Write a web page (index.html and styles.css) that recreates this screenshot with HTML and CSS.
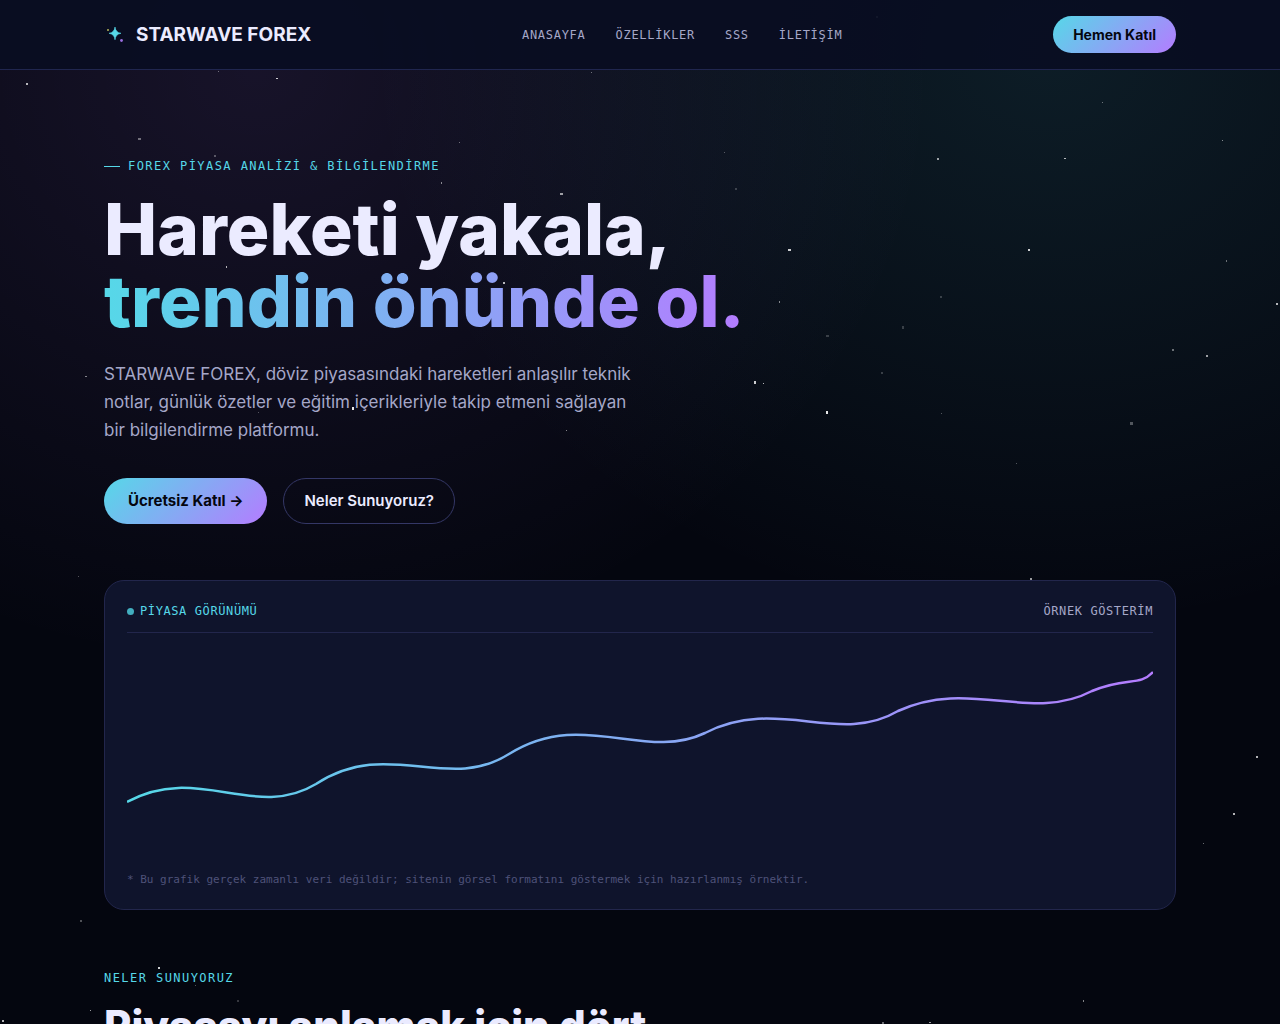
FILE: index.html
```html
<!DOCTYPE html>
<html lang="tr">

<head>
    <meta charset="UTF-8">
    <meta name="viewport" content="width=device-width, initial-scale=1.0">
    <title>STARWAVE FOREX</title>
    <link rel="stylesheet" href="styles.css">
</head>

<body>
    <svg class="stars" id="stars" aria-hidden="true"></svg>

    <header class="site-header">
        <div class="container header-inner">
            <a class="logo" href="#">
                <svg width="22" height="22" viewBox="0 0 22 22" aria-hidden="true">
                    <path d="M11 3 Q11.6 8.6 17 9.3 Q11.6 10 11 15.8 Q10.4 10 5 9.3 Q10.4 8.6 11 3Z" fill="#56d8e8" stroke="#56d8e8" stroke-width="0.6" />
                    <circle cx="4" cy="6" r="1" fill="#b5b65a" />
                    <circle cx="17.5" cy="16.5" r="1.4" fill="#9a6ee0" />
                </svg>
                <span>STARWAVE FOREX</span>
            </a>
            <nav class="nav">
                <a href="#">ANASAYFA</a>
                <a href="#ozellikler">ÖZELLİKLER</a>
                <a href="#sss">SSS</a>
                <a href="#iletisim">İLETİŞİM</a>
            </nav>
            <a class="btn btn-small btn-primary" href="#katil">Hemen Katıl</a>
        </div>
    </header>

    <main class="container">
        <section class="hero">
            <p class="eyebrow eyebrow-line">FOREX PİYASA ANALİZİ &amp; BİLGİLENDİRME</p>
            <h1>Hareketi yakala,<br><span class="gradient-text">trendin önünde ol.</span></h1>
            <p class="lead">STARWAVE FOREX, döviz piyasasındaki hareketleri anlaşılır teknik notlar, günlük özetler ve eğitim içerikleriyle takip etmeni sağlayan bir bilgilendirme platformu.</p>
            <div class="actions">
                <a class="btn btn-primary" href="#katil">Ücretsiz Katıl →</a>
                <a class="btn btn-ghost" href="#ozellikler">Neler Sunuyoruz?</a>
            </div>
        </section>

        <section class="chart-card">
            <div class="chart-head">
                <span class="live">PİYASA GÖRÜNÜMÜ</span>
                <span>ÖRNEK GÖSTERİM</span>
            </div>
            <svg class="chart" viewBox="0 0 1026 220" preserveAspectRatio="none" aria-hidden="true">
                <defs>
                    <linearGradient id="line" x1="0" y1="0" x2="1" y2="0">
                        <stop offset="0" stop-color="#56d8e8" />
                        <stop offset="1" stop-color="#b47cff" />
                    </linearGradient>
                </defs>
                <path d="M0 160 C70 121 128 179 189 142 C260 95 321 151 382 112 C455 66 517 120 578 91 C650 54 712 104 771 69 C842 36 904 81 965 49 C1000 34 1012 45 1026 30" fill="none" stroke="url(#line)" stroke-width="2.5" />
            </svg>
            <p class="chart-note">* Bu grafik gerçek zamanlı veri değildir; sitenin görsel formatını göstermek için hazırlanmış örnektir.</p>
        </section>

        <section class="features" id="ozellikler">
            <p class="eyebrow">NELER SUNUYORUZ</p>
            <h2>Piyasayı anlamak için dört</h2>
        </section>
    </main>

    <script src="stars.js"></script>
</body>

</html>
```

FILE: styles.css
```css
* {
    box-sizing: border-box;
}

body {
    margin: 0;
    font-family: Inter, sans-serif;
    color: #ebebff;
    background-color: #04060f;
    background-image:
        radial-gradient(ellipse 680px 600px at 20% 70px, rgba(180, 124, 255, 0.11), transparent),
        radial-gradient(ellipse 680px 580px at 82% 50px, rgba(86, 216, 232, 0.11), transparent);
    background-repeat: no-repeat;
    overflow-x: hidden;
}

a {
    color: inherit;
    text-decoration: none;
}

h1,
h2,
p {
    margin: 0;
}

.container {
    max-width: 1120px;
    margin: 0 auto;
    padding: 0 24px;
}

/* star field lies over the text but under the card and header */
.stars {
    position: absolute;
    top: 0;
    left: 0;
    width: 100%;
    height: 1024px;
    z-index: 1;
    pointer-events: none;
}

.site-header {
    position: relative;
    z-index: 2;
    background-color: rgba(9, 13, 34, 0.92);
    border-bottom: 1px solid #20264f;
}

.header-inner {
    display: flex;
    align-items: center;
    justify-content: space-between;
    padding-top: 16px;
    padding-bottom: 16px;
}

.logo {
    display: flex;
    align-items: center;
    gap: 10px;
    font-size: 19px;
    line-height: 24px;
    font-weight: 700;
}

.nav {
    display: flex;
    gap: 30px;
    font-family: "DejaVu Sans Mono", monospace;
    font-size: 12px;
    letter-spacing: 0.06em;
    color: #a5a7c8;
}

.btn {
    display: inline-block;
    border-radius: 24px;
    padding: 13px 24px;
    font-size: 15px;
    line-height: 20px;
    font-weight: 700;
}

.btn-small {
    padding: 9px 20px;
    font-size: 14px;
    line-height: 19px;
}

.btn-primary {
    background-image: linear-gradient(135deg, #56d8e8, #b47cff);
    color: #04060f;
}

.btn-ghost {
    border: 1px solid #343766;
    padding: 12px 20px;
    font-weight: 600;
}

.hero {
    padding: 86px 0 56px;
}

.eyebrow {
    font-family: "DejaVu Sans Mono", monospace;
    font-size: 12px;
    line-height: 20px;
    letter-spacing: 0.12em;
    color: #56d8e8;
}

.eyebrow-line {
    display: flex;
    align-items: center;
    gap: 8px;
}

.eyebrow-line::before {
    content: "";
    width: 16px;
    height: 1px;
    background-color: #56d8e8;
}

h1 {
    margin-top: 17px;
    font-size: 71px;
    line-height: 72px;
    font-weight: 800;
}

.gradient-text {
    background-image: linear-gradient(90deg, #56d8e8, #b47cff);
    -webkit-background-clip: text;
    background-clip: text;
    color: transparent;
}

.lead {
    max-width: 540px;
    margin-top: 23px;
    font-size: 17px;
    line-height: 28px;
    color: #a5a7c8;
}

.actions {
    display: flex;
    gap: 16px;
    margin-top: 34px;
}

.chart-card {
    position: relative;
    z-index: 2;
    padding: 20px 22px;
    border: 1px solid #22264c;
    border-radius: 20px;
    background-color: #0f142c;
}

.chart-head {
    display: flex;
    justify-content: space-between;
    padding-bottom: 11px;
    border-bottom: 1px solid #22264c;
    font-family: "DejaVu Sans Mono", monospace;
    font-size: 12px;
    line-height: 20px;
    letter-spacing: 0.05em;
    color: #a5a7c8;
}

.live {
    display: flex;
    align-items: center;
    gap: 6px;
    color: #56d8e8;
}

.live::before {
    content: "";
    width: 7px;
    height: 7px;
    border-radius: 50%;
    background-color: #42aebf;
}

.chart {
    display: block;
    width: 100%;
    height: 220px;
    margin-top: 9px;
}

.chart-note {
    margin-top: 9px;
    font-family: "DejaVu Sans Mono", monospace;
    font-size: 11px;
    line-height: 18px;
    color: #4e5279;
}

.features {
    padding: 58px 0 80px;
}

h2 {
    margin-top: 12px;
    font-size: 42px;
    line-height: 52px;
    font-weight: 800;
}
```

FILE: stars.js
```js
// x, y, width, height, opacity
const stars = [
    [26, 83, 2, 2, 0.7], [276, 78, 2, 1, 0.8], [138, 138, 3, 2, 0.4], [214, 155, 2, 2, 0.3],
    [218, 71, 1, 1, 0.4], [591, 72, 1, 1, 0.4], [459, 142, 1, 1, 0.4], [441, 182, 1, 2, 0.5],
    [560, 193, 3, 2, 0.6], [226, 266, 1, 2, 0.7], [503, 282, 2, 2, 0.7], [724, 152, 1, 1, 0.3],
    [735, 188, 2, 2, 0.2], [788, 249, 3, 2, 0.8], [779, 301, 1, 2, 0.5], [826, 335, 3, 2, 0.2],
    [754, 381, 2, 3, 0.8], [763, 383, 1, 1, 0.7], [826, 411, 2, 3, 0.9], [881, 372, 2, 2, 0.2],
    [902, 326, 2, 3, 0.2], [940, 296, 2, 2, 0.2], [941, 413, 1, 1, 0.3], [937, 158, 2, 2, 0.6],
    [1064, 158, 2, 1, 0.7], [1102, 102, 1, 1, 0.4], [1028, 249, 2, 2, 0.8], [1222, 140, 1, 1, 0.5],
    [1226, 260, 1, 2, 0.4], [1276, 303, 2, 2, 0.7], [1172, 349, 2, 2, 0.4], [1206, 355, 2, 2, 0.6],
    [1130, 422, 3, 3, 0.3], [1016, 463, 1, 1, 0.3], [566, 430, 1, 1, 0.5], [352, 407, 2, 3, 0.9],
    [258, 412, 1, 1, 0.3], [85, 376, 2, 1, 0.5], [78, 576, 1, 1, 0.3], [1030, 578, 2, 2, 0.6],
    [1256, 756, 2, 2, 0.7], [1233, 813, 2, 2, 0.7], [1203, 843, 1, 1, 0.4], [80, 920, 2, 2, 0.3],
    [158, 967, 2, 2, 0.8], [237, 1000, 2, 2, 0.2], [90, 1010, 1, 1, 0.6], [2, 1020, 2, 2, 0.7],
    [195, 985, 1, 1, 0.3], [1083, 1000, 1, 2, 0.5], [882, 1022, 2, 2, 0.4], [929, 1022, 2, 1, 0.6],
    [876, 16, 2, 2, 0.5]
];

const field = document.getElementById("stars");

stars.forEach(([x, y, width, height, opacity]) => {
    const star = document.createElementNS("http://www.w3.org/2000/svg", "rect");
    star.setAttribute("x", x);
    star.setAttribute("y", y);
    star.setAttribute("width", width);
    star.setAttribute("height", height);
    star.setAttribute("fill", "#ffffff");
    star.setAttribute("fill-opacity", opacity);
    field.appendChild(star);
});
```
